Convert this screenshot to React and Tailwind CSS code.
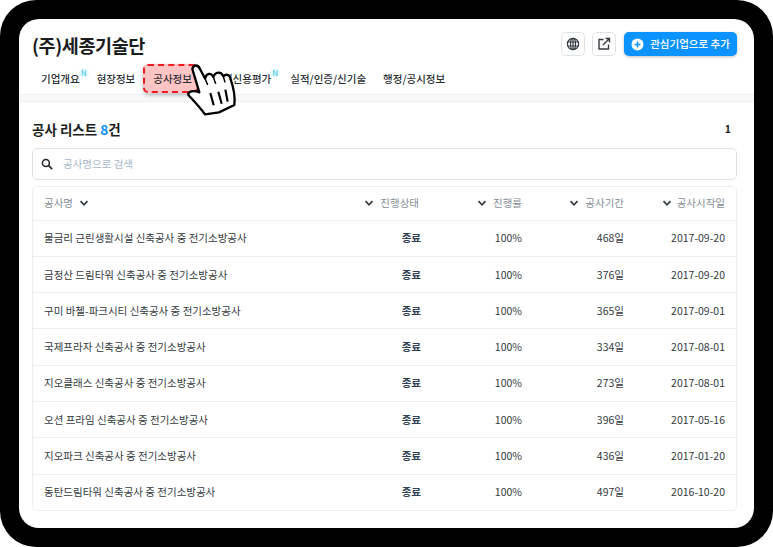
import React from "react";

const rows = [
  ["물금리 근린생활시설 신축공사 중 전기소방공사", "468일", "2017-09-20"],
  ["금정산 드림타워 신축공사 중 전기소방공사", "376일", "2017-09-20"],
  ["구미 바첼-파크시티 신축공사 중 전기소방공사", "365일", "2017-09-01"],
  ["국제프라자 신축공사 중 전기소방공사", "334일", "2017-08-01"],
  ["지오클래스 신축공사 중 전기소방공사", "273일", "2017-08-01"],
  ["오션 프라임 신축공사 중 전기소방공사", "396일", "2017-05-16"],
  ["지오파크 신축공사 중 전기소방공사", "436일", "2017-01-20"],
  ["동탄드림타워 신축공사 중 전기소방공사", "497일", "2016-10-20"],
];

const Chevron = () => (
  <svg width="10" height="10" viewBox="0 0 10 10" className="shrink-0">
    <path d="M1.5 3.2 5 6.8 8.5 3.2" fill="none" stroke="#343a40" strokeWidth="1.7" />
  </svg>
);

const Head = ({ children, last }) => (
  <div className={last ? "flex items-center justify-end gap-[5px] pr-[11px] text-[#868e96]" : "flex items-center justify-end gap-[6px] pr-[12px] text-[#868e96]"}>
    <Chevron />
    <span>{children}</span>
  </div>
);

const Tab = ({ children, n, active }) => (
  <div
    className={
      active
        ? "relative flex h-[29px] w-[55px] items-center justify-start rounded-[5px] border-2 border-dashed border-[#f01a24] bg-[#ffc4c4] pl-[8px] shadow-[0_2px_4px_rgba(0,0,0,0.25)]"
        : "relative flex h-[29px] items-center"
    }
  >
    <span className="whitespace-nowrap">{children}</span>
    {n && (
      <span className="absolute top-[4px] right-[-9px] flex h-[10px] w-[10px] items-center justify-center rounded-full bg-[#e8f9fd] text-[8px] leading-[10px] font-normal text-[#35c4e8]">N</span>
    )}
  </div>
);

export default function App() {
  return (
    <div className="h-[547px] w-[773px] overflow-hidden bg-white font-['Noto_Sans_CJK_KR','Noto_Sans',sans-serif]">
      <div className="h-[547px] w-[773px] rounded-[36px] bg-black pt-[19px] pr-[19px] pb-[19px] pl-[19px]">
        <div className="relative flex h-[509px] w-[735px] flex-col overflow-hidden rounded-[20px] bg-white text-[#212529]">
          <div className="flex h-[44px] items-start justify-between pt-[13px] pr-[17px] pl-[13px]">
            <h1 className="text-[18.5px] leading-[26px] font-bold tracking-[-0.4px] text-[#1a1d20]">(주)세종기술단</h1>
            <div className="flex items-center">
              <button className="mr-[7px] flex h-[24px] w-[24px] items-center justify-center rounded-[5px] border border-[#dfe2e5] bg-white">
                <svg width="14" height="14" viewBox="0 0 14 14" fill="none" stroke="#343a40" strokeWidth="1.2">
                  <circle cx="7" cy="7" r="5.6" />
                  <ellipse cx="7" cy="7" rx="2.5" ry="5.6" />
                  <path d="M1.4 5h11.2M1.4 9h11.2M7 1.4v11.2" />
                </svg>
              </button>
              <button className="mr-[8px] flex h-[24px] w-[24px] items-center justify-center rounded-[5px] border border-[#dfe2e5] bg-white">
                <svg width="14" height="14" viewBox="0 0 14 14" fill="none" stroke="#343a40" strokeWidth="1.4">
                  <path d="M6.5 2.5H2v9.5h9.5V7.5" />
                  <path d="M6 8l6-6M8.5 1.5h4v4" />
                </svg>
              </button>
              <button className="flex h-[24px] w-[113px] items-center justify-center gap-[6px] rounded-[5px] bg-[#0c93ff] text-[10.5px] font-medium text-white shadow-[0_1px_3px_rgba(0,0,0,0.25)]">
                <svg width="13" height="13" viewBox="0 0 13 13">
                  <circle cx="6.5" cy="6.5" r="6" fill="#fff" />
                  <path d="M6.500 3.600v5.800M3.600 6.500h5.800" stroke="#0c93ff" strokeWidth="1.600" />
                </svg>
                <span className="whitespace-nowrap">관심기업으로 추가</span>
              </button>
            </div>
          </div>

          <div className="flex h-[31px] items-center pl-[22px] text-[10.5px] font-medium text-[#2b3036]">
            <div className="mr-[17px]"><Tab n>기업개요</Tab></div>
            <div className="mr-[8px]"><Tab>현장정보</Tab></div>
            <div className="mr-[15px]"><Tab active>공사정보</Tab></div>
            <div className="mr-[19px]"><Tab n>기업신용평가</Tab></div>
            <div className="mr-[17px]"><Tab>실적/인증/신기술</Tab></div>
            <Tab>행정/공시정보</Tab>
          </div>

          <div className="h-[8px] border-y border-[#eef0f2] bg-[#f7f8f9]" />

          <div className="flex flex-1 flex-col pr-[17px] pl-[13px]">
            <div className="flex h-[46px] items-center justify-between pt-[7px]">
              <div className="text-[13.5px] leading-[20px] font-bold text-[#1a1d20]">
                공사 리스트 <span className="text-[#0c93ff]">8</span>건
              </div>
              <div className="pr-[6px] text-[10.5px] font-bold text-[#1a1d20]">1</div>
            </div>

            <div className="flex h-[32px] items-center gap-[10px] rounded-[5px] border border-[#dfe2e5] pl-[8px] text-[10.5px] text-[#a9b8cc]">
              <svg width="12" height="12" viewBox="0 0 11 11" fill="none" stroke="#212529" strokeWidth="1.4">
                <circle cx="4.5" cy="4.5" r="3.2" />
                <path d="M7 7l3.2 3.2" />
              </svg>
              <span>공사명으로 검색</span>
            </div>

            <div className="mt-[6px] overflow-hidden rounded-[5px] border border-[#eceef0] text-[10.5px]">
              <div className="grid h-[33.5px] grid-cols-[320px_78px_103px_102px_100px] items-center border-b border-[#eceef0]">
                <div className="flex items-center gap-[6px] pl-[11px] text-[#868e96]">
                  <span>공사명</span>
                  <Chevron />
                </div>
                <Head>진행상태</Head>
                <Head>진행률</Head>
                <Head>공사기간</Head>
                <Head last>공사시작일</Head>
              </div>
              {rows.map((r, i) => (
                <div
                  key={r[0]}
                  className={
                    i < 7
                      ? "grid h-[36.3px] grid-cols-[320px_78px_103px_102px_100px] items-center border-b border-[#eff1f3] text-[#343a40]"
                      : "grid h-[35.5px] grid-cols-[320px_78px_103px_102px_100px] items-center text-[#343a40]"
                  }
                >
                  <div className="pl-[11px] whitespace-nowrap">{r[0]}</div>
                  <div className="pr-[10px] text-right font-bold text-[#2f3f55]">종료</div>
                  <div className="pr-[12px] text-right">100%</div>
                  <div className="pr-[12px] text-right">{r[1]}</div>
                  <div className="pr-[11px] text-right">{r[2]}</div>
                </div>
              ))}
            </div>
          </div>

          <svg className="absolute top-[35.500px] left-[110px]" width="120" height="65" viewBox="0 0 360 195">
            <path
              d="M190 42C193 28 207 28 213 42L228 70C233 54 246 52 253 66C259 50 276 48 283 64C291 56 301 58 304 70C313 95 319 125 316 150L270 172L228 178C215 160 197 140 178 120C176 110 192 104 211 112Z"
              fill="#fff"
              stroke="#000"
              strokeWidth="7"
              strokeLinejoin="round"
            />
            <path d="M244 114l10 37M268 110l10 36M289 104l7 36" stroke="#000" strokeWidth="6.500" fill="none" />
            <path d="M228 70l8 20M253 66l7 20M283 64l5 18" stroke="#000" strokeWidth="4.500" fill="none" />
          </svg>
        </div>
      </div>
    </div>
  );
}
